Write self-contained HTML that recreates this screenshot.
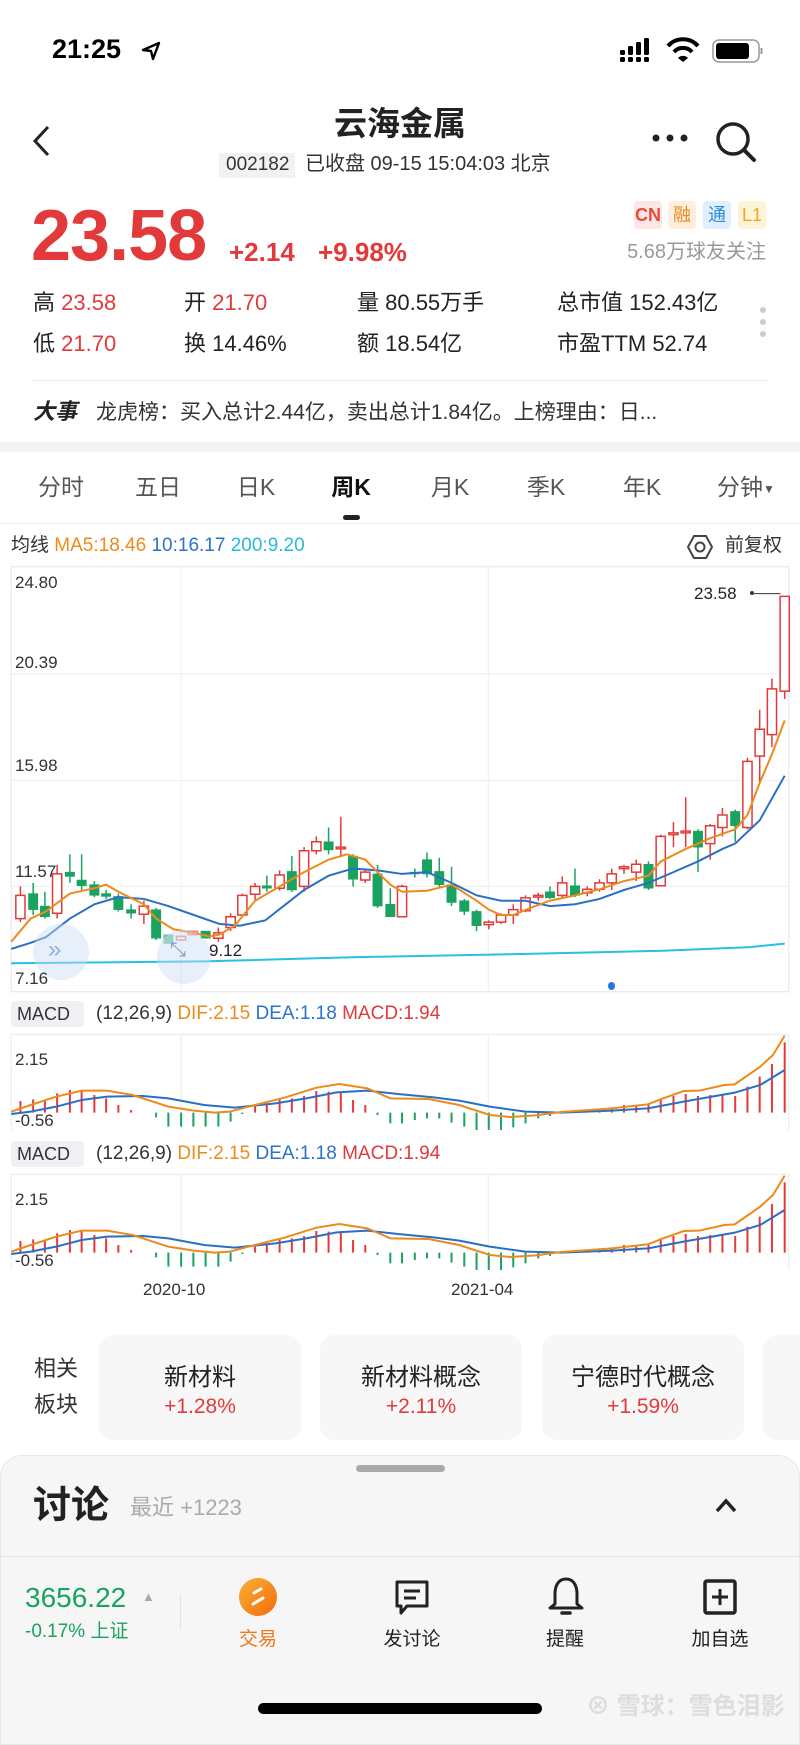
<!DOCTYPE html>
<html><head><meta charset="utf-8">
<style>
*{margin:0;padding:0;box-sizing:border-box}
body{width:800px;height:1731px;position:relative;background:#fff;font-family:"Liberation Sans","Noto Sans CJK SC",sans-serif;color:#222;overflow:hidden}
.a{position:absolute;white-space:nowrap;line-height:1}
.r{color:#e23a3a}
.g{color:#1aa260}
.gr{color:#999}
.card{position:absolute;top:1335px;height:105px;width:202px;background:#f7f7f7;border-radius:14px;text-align:center}
.card .n{position:absolute;top:22px;left:0;right:0;font-size:24px;color:#222}
.card .p{position:absolute;top:60px;left:0;right:0;font-size:21px;color:#e23a3a}
.tab{position:absolute;top:476px;font-size:23px;color:#555;transform:translateX(-50%);white-space:nowrap;line-height:1}
.lbl{position:absolute;font-size:16px;color:#333;white-space:nowrap}
.bi{position:absolute;top:1624px;font-size:19px;color:#222;transform:translateX(-50%);white-space:nowrap}
</style></head><body>

<!-- status bar -->
<div class="a" style="left:52px;top:36px;font-size:27px;font-weight:bold;color:#000">21:25</div>
<svg class="a" style="left:140px;top:40px" width="22" height="22" viewBox="0 0 22 22"><path d="M3 10 L19 3 L13 19 L11 11 Z" fill="none" stroke="#000" stroke-width="2.4" stroke-linejoin="round"/></svg>
<svg class="a" style="left:618px;top:36px" width="145" height="30" viewBox="0 0 145 30">
<rect x="2" y="14" width="5" height="5" rx="1.5"/><rect x="10" y="10" width="5" height="9" rx="1.5"/><rect x="18" y="6" width="5" height="13" rx="1.5"/><rect x="26" y="2" width="5" height="17" rx="1.5"/>
<rect x="2" y="21" width="5" height="5" rx="1.5"/><rect x="10" y="21" width="5" height="5" rx="1.5"/><rect x="18" y="21" width="5" height="5" rx="1.5"/><rect x="26" y="21" width="5" height="5" rx="1.5"/>
<path d="M50 10 A20 20 0 0 1 80 10" fill="none" stroke="#000" stroke-width="4"/><path d="M56 16 A12 12 0 0 1 74 16" fill="none" stroke="#000" stroke-width="4"/><path d="M60 22 L65 26 L70 22 A7 7 0 0 0 60 22Z"/>
<rect x="95" y="4" width="46" height="22" rx="6" fill="none" stroke="#999" stroke-width="1.5"/><rect x="98" y="7" width="33" height="16" rx="3"/><rect x="142.5" y="12" width="2" height="6" fill="#999"/>
</svg>

<!-- nav -->
<svg class="a" style="left:30px;top:124px" width="24" height="34" viewBox="0 0 24 34"><path d="M18 3 L5 17 L18 31" fill="none" stroke="#222" stroke-width="3"/></svg>
<div class="a" style="left:0;width:800px;text-align:center;top:107px;font-size:33px;font-weight:bold;color:#222">云海金属</div>
<div class="a" style="left:219px;top:153px;width:76px;height:25px;background:#f2f2f2"></div>
<div class="a" style="left:226px;top:155px;font-size:19px;color:#333">002182</div>
<div class="a" style="left:305px;top:154px;font-size:20px;color:#333">已收盘 09-15 15:04:03 北京</div>
<svg class="a" style="left:650px;top:132px" width="40" height="12"><circle cx="6" cy="6" r="3.5" fill="#222"/><circle cx="20" cy="6" r="3.5" fill="#222"/><circle cx="34" cy="6" r="3.5" fill="#222"/></svg>
<svg class="a" style="left:714px;top:120px" width="44" height="44" viewBox="0 0 44 44"><circle cx="19" cy="19" r="15" fill="none" stroke="#222" stroke-width="3.5"/><path d="M30 30 L40 40" stroke="#222" stroke-width="4" stroke-linecap="round"/></svg>

<!-- price -->
<div class="a r" style="left:31px;top:200px;font-size:72px;font-weight:bold;letter-spacing:-1px">23.58</div>
<div class="a r" style="left:229px;top:239px;font-size:26px;font-weight:bold">+2.14</div>
<div class="a r" style="left:318px;top:239px;font-size:26px;font-weight:bold">+9.98%</div>
<div class="a" style="left:634px;top:201px;width:28px;height:28px;background:#fde6e6;border-radius:4px;color:#e84a3a;font-size:18px;font-weight:bold;text-align:center;line-height:28px">CN</div>
<div class="a" style="left:668px;top:201px;width:28px;height:28px;background:#fdeedd;border-radius:4px;color:#ec8a1c;font-size:18px;text-align:center;line-height:28px">融</div>
<div class="a" style="left:703px;top:201px;width:28px;height:28px;background:#e1effc;border-radius:4px;color:#2a8be6;font-size:18px;text-align:center;line-height:28px">通</div>
<div class="a" style="left:738px;top:201px;width:28px;height:28px;background:#fdf3d8;border-radius:4px;color:#f0a81a;font-size:18px;text-align:center;line-height:28px">L1</div>
<div class="a gr" style="right:34px;top:242px;font-size:20px">5.68万球友关注</div>

<div class="a" style="left:33px;top:292px;font-size:22px">高 <span class="r">23.58</span></div>
<div class="a" style="left:184px;top:292px;font-size:22px">开 <span class="r">21.70</span></div>
<div class="a" style="left:357px;top:292px;font-size:22px">量 80.55万手</div>
<div class="a" style="left:557px;top:292px;font-size:22px">总市值 152.43亿</div>
<div class="a" style="left:33px;top:333px;font-size:22px">低 <span class="r">21.70</span></div>
<div class="a" style="left:184px;top:333px;font-size:22px">换 14.46%</div>
<div class="a" style="left:357px;top:333px;font-size:22px">额 18.54亿</div>
<div class="a" style="left:557px;top:333px;font-size:22px">市盈TTM 52.74</div>
<svg class="a" style="left:758px;top:305px" width="10" height="40"><circle cx="5" cy="5" r="3" fill="#ccc"/><circle cx="5" cy="17" r="3" fill="#ccc"/><circle cx="5" cy="29" r="3" fill="#ccc"/></svg>
<div class="a" style="left:33px;top:380px;width:734px;height:1px;background:#e8e8e8"></div>
<div class="a" style="left:33px;top:401px;font-size:22px;font-weight:bold;font-style:italic">大事</div>
<div class="a" style="left:96px;top:402px;font-size:21px;color:#333">龙虎榜：买入总计2.44亿，卖出总计1.84亿。上榜理由：日...</div>
<div class="a" style="left:0;top:442px;width:800px;height:10px;background:#f3f4f7"></div>

<!-- tabs -->
<div class="tab" style="left:61px">分时</div>
<div class="tab" style="left:158px">五日</div>
<div class="tab" style="left:256px">日K</div>
<div class="tab" style="left:351px;color:#111;font-weight:bold">周K</div>
<div class="tab" style="left:450px">月K</div>
<div class="tab" style="left:546px">季K</div>
<div class="tab" style="left:642px">年K</div>
<div class="tab" style="left:746px">分钟<span style="font-size:12px;vertical-align:middle">▼</span></div>
<div class="a" style="left:343px;top:515px;width:17px;height:5px;border-radius:3px;background:#222"></div>
<div class="a" style="left:0;top:523px;width:800px;height:1px;background:#eee"></div>

<div class="a" style="left:11px;top:536px;font-size:19px;color:#333">均线 <span style="color:#ec8a1c">MA5:18.46</span> <span style="color:#2a73c8">10:16.17</span> <span style="color:#27b8e0">200:9.20</span></div>
<svg class="a" style="left:686px;top:533px" width="28" height="28" viewBox="0 0 28 28"><path d="M8 3 L20 3 L26 14 L20 25 L8 25 L2 14 Z" fill="none" stroke="#444" stroke-width="2"/><circle cx="14" cy="14" r="4.5" fill="none" stroke="#444" stroke-width="2"/></svg>
<div class="a" style="left:725px;top:536px;font-size:19px;color:#333">前复权</div>

<!-- main chart -->
<svg class="a" style="left:0;top:440px" width="800" height="560" viewBox="0 0 1568 1568" preserveAspectRatio="none">
<g stroke="#eee" vector-effect="non-scaling-stroke" fill="none">
<rect x="22" y="355" width="1524" height="1190" stroke="#e6e6e6" vector-effect="non-scaling-stroke"/>
<line x1="22" y1="655" x2="1546" y2="655" vector-effect="non-scaling-stroke"/>
<line x1="22" y1="953" x2="1546" y2="953" vector-effect="non-scaling-stroke"/>
<line x1="22" y1="1250" x2="1546" y2="1250" vector-effect="non-scaling-stroke"/>
<line x1="355" y1="355" x2="355" y2="1545" vector-effect="non-scaling-stroke"/>
<line x1="957" y1="355" x2="957" y2="1545" vector-effect="non-scaling-stroke"/>
</g>
<polyline vector-effect="non-scaling-stroke" fill="none" stroke="#27c0e0" stroke-width="2" points="22,1465 400,1460 700,1448 1000,1440 1300,1430 1470,1420 1538,1410"/>
<g vector-effect="non-scaling-stroke" stroke-width="1.5">
<g stroke="#1aa260" fill="#1aa260">
<line x1="65" y1="1240" x2="65" y2="1330" vector-effect="non-scaling-stroke"/><rect x="56" y="1270" width="18" height="45"/>
<line x1="88" y1="1265" x2="88" y2="1340" vector-effect="non-scaling-stroke"/><rect x="79" y="1305" width="18" height="30"/>
<line x1="137" y1="1160" x2="137" y2="1240" vector-effect="non-scaling-stroke"/><rect x="128" y="1210" width="18" height="12"/>
<line x1="160" y1="1160" x2="160" y2="1260" vector-effect="non-scaling-stroke"/><rect x="151" y="1232" width="18" height="16"/>
<line x1="185" y1="1235" x2="185" y2="1280" vector-effect="non-scaling-stroke"/><rect x="176" y="1245" width="18" height="30"/>
<line x1="208" y1="1260" x2="208" y2="1285" vector-effect="non-scaling-stroke"/><rect x="199" y="1270" width="18" height="8"/>
<line x1="232" y1="1270" x2="232" y2="1320" vector-effect="non-scaling-stroke"/><rect x="223" y="1278" width="18" height="37"/>
<line x1="257" y1="1300" x2="257" y2="1340" vector-effect="non-scaling-stroke"/><rect x="248" y="1315" width="18" height="10"/>
<line x1="306" y1="1310" x2="306" y2="1400" vector-effect="non-scaling-stroke"/><rect x="297" y="1315" width="18" height="80"/>
<rect x="321" y="1385" width="18" height="25" opacity=".6"/>
<rect x="394" y="1375" width="18" height="20"/>
<line x1="523" y1="1220" x2="523" y2="1265" vector-effect="non-scaling-stroke"/><rect x="514" y="1248" width="18" height="7"/>
<line x1="572" y1="1165" x2="572" y2="1265" vector-effect="non-scaling-stroke"/><rect x="563" y="1208" width="18" height="52"/>
<line x1="644" y1="1085" x2="644" y2="1160" vector-effect="non-scaling-stroke"/><rect x="635" y="1125" width="18" height="23"/>
<line x1="692" y1="1160" x2="692" y2="1250" vector-effect="non-scaling-stroke"/><rect x="683" y="1165" width="18" height="65"/>
<line x1="740" y1="1190" x2="740" y2="1310" vector-effect="non-scaling-stroke"/><rect x="731" y="1215" width="18" height="90"/>
<line x1="765" y1="1255" x2="765" y2="1335" vector-effect="non-scaling-stroke"/><rect x="756" y="1300" width="18" height="35"/>
<line x1="813" y1="1200" x2="813" y2="1225" vector-effect="non-scaling-stroke"/><rect x="804" y="1210" width="18" height="5"/>
<line x1="837" y1="1155" x2="837" y2="1225" vector-effect="non-scaling-stroke"/><rect x="828" y="1175" width="18" height="40"/>
<line x1="861" y1="1170" x2="861" y2="1250" vector-effect="non-scaling-stroke"/><rect x="852" y="1208" width="18" height="37"/>
<line x1="885" y1="1195" x2="885" y2="1305" vector-effect="non-scaling-stroke"/><rect x="876" y="1245" width="18" height="50"/>
<line x1="910" y1="1285" x2="910" y2="1330" vector-effect="non-scaling-stroke"/><rect x="901" y="1290" width="18" height="30"/>
<line x1="934" y1="1315" x2="934" y2="1375" vector-effect="non-scaling-stroke"/><rect x="925" y="1320" width="18" height="40"/>
<line x1="1078" y1="1250" x2="1078" y2="1285" vector-effect="non-scaling-stroke"/><rect x="1069" y="1265" width="18" height="17"/>
<line x1="1127" y1="1200" x2="1127" y2="1280" vector-effect="non-scaling-stroke"/><rect x="1118" y="1248" width="18" height="27"/>
<line x1="1271" y1="1180" x2="1271" y2="1260" vector-effect="non-scaling-stroke"/><rect x="1262" y="1188" width="18" height="67"/>
<line x1="1368" y1="1090" x2="1368" y2="1210" vector-effect="non-scaling-stroke"/><rect x="1359" y="1095" width="18" height="45"/>
<line x1="1441" y1="1035" x2="1441" y2="1125" vector-effect="non-scaling-stroke"/><rect x="1432" y="1040" width="18" height="40"/>
</g>
<g stroke="#e23a3a" fill="#fff">
<line x1="40" y1="1250" x2="40" y2="1350" vector-effect="non-scaling-stroke"/><rect x="31" y="1275" width="18" height="65" vector-effect="non-scaling-stroke"/>
<line x1="112" y1="1190" x2="112" y2="1340" vector-effect="non-scaling-stroke"/><rect x="103" y="1215" width="18" height="110" vector-effect="non-scaling-stroke"/>
<line x1="282" y1="1290" x2="282" y2="1355" vector-effect="non-scaling-stroke"/><rect x="273" y="1305" width="18" height="23" vector-effect="non-scaling-stroke"/>
<rect x="346" y="1390" width="18" height="10" vector-effect="non-scaling-stroke" opacity=".6"/>
<rect x="369" y="1375" width="18" height="10" vector-effect="non-scaling-stroke" opacity=".6"/>
<line x1="428" y1="1365" x2="428" y2="1405" vector-effect="non-scaling-stroke"/><rect x="419" y="1380" width="18" height="15" vector-effect="non-scaling-stroke"/>
<line x1="452" y1="1325" x2="452" y2="1375" vector-effect="non-scaling-stroke"/><rect x="443" y="1335" width="18" height="30" vector-effect="non-scaling-stroke"/>
<line x1="475" y1="1270" x2="475" y2="1335" vector-effect="non-scaling-stroke"/><rect x="466" y="1275" width="18" height="55" vector-effect="non-scaling-stroke"/>
<line x1="500" y1="1240" x2="500" y2="1290" vector-effect="non-scaling-stroke"/><rect x="491" y="1250" width="18" height="22" vector-effect="non-scaling-stroke"/>
<line x1="548" y1="1205" x2="548" y2="1262" vector-effect="non-scaling-stroke"/><rect x="539" y="1218" width="18" height="37" vector-effect="non-scaling-stroke"/>
<line x1="596" y1="1140" x2="596" y2="1265" vector-effect="non-scaling-stroke"/><rect x="587" y="1150" width="18" height="100" vector-effect="non-scaling-stroke"/>
<line x1="620" y1="1110" x2="620" y2="1160" vector-effect="non-scaling-stroke"/><rect x="611" y="1125" width="18" height="25" vector-effect="non-scaling-stroke"/>
<line x1="668" y1="1055" x2="668" y2="1165" vector-effect="non-scaling-stroke"/><rect x="659" y="1140" width="18" height="5" vector-effect="non-scaling-stroke"/>
<line x1="716" y1="1200" x2="716" y2="1240" vector-effect="non-scaling-stroke"/><rect x="707" y="1210" width="18" height="22" vector-effect="non-scaling-stroke"/>
<line x1="788" y1="1245" x2="788" y2="1335" vector-effect="non-scaling-stroke"/><rect x="779" y="1250" width="18" height="85" vector-effect="non-scaling-stroke"/>
<line x1="958" y1="1345" x2="958" y2="1370" vector-effect="non-scaling-stroke"/><rect x="949" y="1350" width="18" height="7" vector-effect="non-scaling-stroke"/>
<line x1="982" y1="1325" x2="982" y2="1355" vector-effect="non-scaling-stroke"/><rect x="973" y="1330" width="18" height="20" vector-effect="non-scaling-stroke"/>
<line x1="1006" y1="1300" x2="1006" y2="1355" vector-effect="non-scaling-stroke"/><rect x="997" y="1315" width="18" height="15" vector-effect="non-scaling-stroke"/>
<line x1="1030" y1="1275" x2="1030" y2="1322" vector-effect="non-scaling-stroke"/><rect x="1021" y="1282" width="18" height="36" vector-effect="non-scaling-stroke"/>
<line x1="1055" y1="1268" x2="1055" y2="1290" vector-effect="non-scaling-stroke"/><rect x="1046" y="1275" width="18" height="5" vector-effect="non-scaling-stroke"/>
<line x1="1102" y1="1222" x2="1102" y2="1280" vector-effect="non-scaling-stroke"/><rect x="1093" y="1240" width="18" height="35" vector-effect="non-scaling-stroke"/>
<line x1="1151" y1="1250" x2="1151" y2="1278" vector-effect="non-scaling-stroke"/><rect x="1142" y="1258" width="18" height="10" vector-effect="non-scaling-stroke"/>
<line x1="1175" y1="1230" x2="1175" y2="1265" vector-effect="non-scaling-stroke"/><rect x="1166" y="1240" width="18" height="18" vector-effect="non-scaling-stroke"/>
<line x1="1199" y1="1200" x2="1199" y2="1260" vector-effect="non-scaling-stroke"/><rect x="1190" y="1215" width="18" height="25" vector-effect="non-scaling-stroke"/>
<line x1="1223" y1="1190" x2="1223" y2="1215" vector-effect="non-scaling-stroke"/><rect x="1214" y="1195" width="18" height="5" vector-effect="non-scaling-stroke"/>
<line x1="1247" y1="1175" x2="1247" y2="1235" vector-effect="non-scaling-stroke"/><rect x="1238" y="1188" width="18" height="22" vector-effect="non-scaling-stroke"/>
<line x1="1295" y1="1105" x2="1295" y2="1250" vector-effect="non-scaling-stroke"/><rect x="1286" y="1110" width="18" height="138" vector-effect="non-scaling-stroke"/>
<line x1="1320" y1="1070" x2="1320" y2="1140" vector-effect="non-scaling-stroke"/><rect x="1311" y="1100" width="18" height="5" vector-effect="non-scaling-stroke"/>
<line x1="1344" y1="1000" x2="1344" y2="1140" vector-effect="non-scaling-stroke"/><rect x="1335" y="1095" width="18" height="5" vector-effect="non-scaling-stroke"/>
<line x1="1392" y1="1075" x2="1392" y2="1175" vector-effect="non-scaling-stroke"/><rect x="1383" y="1080" width="18" height="50" vector-effect="non-scaling-stroke"/>
<line x1="1416" y1="1030" x2="1416" y2="1110" vector-effect="non-scaling-stroke"/><rect x="1407" y="1050" width="18" height="35" vector-effect="non-scaling-stroke"/>
<line x1="1465" y1="890" x2="1465" y2="1090" vector-effect="non-scaling-stroke"/><rect x="1456" y="900" width="18" height="185" vector-effect="non-scaling-stroke"/>
<line x1="1489" y1="755" x2="1489" y2="960" vector-effect="non-scaling-stroke"/><rect x="1480" y="810" width="18" height="75" vector-effect="non-scaling-stroke"/>
<line x1="1513" y1="668" x2="1513" y2="860" vector-effect="non-scaling-stroke"/><rect x="1504" y="697" width="18" height="128" vector-effect="non-scaling-stroke"/>
<line x1="1538" y1="438" x2="1538" y2="725" vector-effect="non-scaling-stroke"/><rect x="1529" y="438" width="18" height="265" vector-effect="non-scaling-stroke"/>
</g>
</g>
<polyline vector-effect="non-scaling-stroke" fill="none" stroke="#2a6fc4" stroke-width="2" points="22,1425 60,1408 90,1392 137,1340 185,1300 232,1280 282,1285 330,1305 380,1330 430,1355 470,1360 520,1345 560,1300 596,1260 644,1220 692,1200 740,1205 788,1215 837,1210 885,1240 934,1275 982,1290 1030,1290 1078,1305 1127,1300 1175,1285 1223,1260 1271,1240 1320,1210 1368,1180 1416,1145 1441,1130 1489,1065 1538,940"/>
<polyline vector-effect="non-scaling-stroke" fill="none" stroke="#ec8a1c" stroke-width="2" points="22,1405 60,1340 90,1320 137,1270 185,1255 208,1245 232,1265 282,1300 306,1340 340,1370 380,1380 410,1390 430,1385 460,1360 500,1290 548,1250 596,1210 644,1175 680,1160 716,1175 740,1210 765,1245 788,1265 837,1262 885,1245 934,1290 958,1315 982,1330 1006,1330 1040,1310 1078,1290 1127,1275 1175,1258 1223,1235 1271,1220 1295,1180 1344,1145 1392,1115 1441,1090 1465,1050 1489,960 1513,880 1538,785"/>
<line x1="1478" y1="430" x2="1530" y2="430" stroke="#333" vector-effect="non-scaling-stroke"/>
</svg>
<div class="a" style="left:33px;top:924px;width:56px;height:56px;border-radius:50%;background:rgba(200,220,245,.45)"></div>
<div class="a" style="left:48px;top:938px;font-size:24px;color:#8eb0dc">»</div>
<div class="a" style="left:157px;top:930px;width:54px;height:54px;border-radius:50%;background:rgba(200,220,245,.45)"></div>
<div class="a" style="left:170px;top:940px;font-size:20px;color:#7c9cc8">⤡</div>
<div class="lbl" style="left:15px;top:573px;font-size:17px">24.80</div>
<div class="lbl" style="left:15px;top:653px;font-size:17px">20.39</div>
<div class="lbl" style="left:15px;top:756px;font-size:17px">15.98</div>
<div class="lbl" style="left:15px;top:862px;font-size:17px">11.57</div>
<div class="lbl" style="left:15px;top:969px;font-size:17px">7.16</div>
<div class="lbl" style="left:694px;top:584px;font-size:17px;color:#222">23.58</div>
<div class="a" style="left:750px;top:591px;width:4px;height:4px;border-radius:50%;background:#333"></div>
<div class="lbl" style="left:209px;top:941px;font-size:17px;color:#222">9.12</div>
<div class="a" style="left:608px;top:982px;width:7px;height:8px;border-radius:50%;background:#2a73e0"></div>

<!-- MACD panels -->
<div class="a" style="left:11px;top:1001px;width:73px;height:26px;background:#eef0f4;border-radius:4px"></div>
<div class="a" style="left:17px;top:1005px;font-size:18px;color:#333">MACD</div>
<div class="a" style="left:96px;top:1004px;font-size:19px;color:#333">(12,26,9) <span style="color:#ec8a1c">DIF:2.15</span> <span style="color:#2a73c8">DEA:1.18</span> <span style="color:#e23a3a">MACD:1.94</span></div>
<div class="a" style="left:11px;top:1141px;width:73px;height:26px;background:#eef0f4;border-radius:4px"></div>
<div class="a" style="left:17px;top:1145px;font-size:18px;color:#333">MACD</div>
<div class="a" style="left:96px;top:1144px;font-size:19px;color:#333">(12,26,9) <span style="color:#ec8a1c">DIF:2.15</span> <span style="color:#2a73c8">DEA:1.18</span> <span style="color:#e23a3a">MACD:1.94</span></div>

<svg class="a" style="left:0;top:990px" width="800" height="140" viewBox="0 0 1568 420" preserveAspectRatio="none">
<g fill="none" stroke="#eaeaea"><rect x="22" y="133" width="1524" height="292" vector-effect="non-scaling-stroke"/><line x1="355" y1="133" x2="355" y2="425" vector-effect="non-scaling-stroke"/><line x1="957" y1="133" x2="957" y2="425" vector-effect="non-scaling-stroke"/></g>
<g stroke-width="2">
<path stroke="#e23a3a" vector-effect="non-scaling-stroke" d="M40 368V333M65 368V328M88 368V330M112 368V310M137 368V300M160 368V302M185 368V315M208 368V325M232 368V345M257 368V360M500 368V350M523 368V345M548 368V328M572 368V325M596 368V318M620 368V303M644 368V305M668 368V305M692 368V330M716 368V345M1102 368V365M1127 368V362M1151 368V360M1175 368V356M1199 368V352M1223 368V345M1247 368V345M1271 368V342M1295 368V325M1320 368V318M1344 368V312M1368 368V318M1392 368V315M1416 368V315M1441 368V318M1465 368V290M1489 368V260M1513 368V222M1538 368V157"/>
<path stroke="#1aa260" vector-effect="non-scaling-stroke" d="M306 368V382M330 368V410M355 368V410M379 368V410M403 368V410M428 368V410M452 368V395M475 368V372M740 368V375M765 368V400M788 368V400M813 368V390M837 368V385M861 368V385M885 368V398M910 368V410M934 368V420M958 368V425M982 368V420M1006 368V412M1030 368V400M1055 368V385M1078 368V378"/>
</g>
<polyline vector-effect="non-scaling-stroke" fill="none" stroke="#2a6fc4" stroke-width="2" points="22,372 60,365 110,350 160,330 210,320 280,318 330,325 400,345 460,353 540,340 600,325 660,307 720,302 780,312 850,322 900,332 960,350 1030,365 1100,368 1200,362 1270,355 1340,335 1440,308 1490,285 1538,240"/>
<polyline vector-effect="non-scaling-stroke" fill="none" stroke="#ec8a1c" stroke-width="2" points="22,365 60,345 110,320 160,302 210,302 260,315 330,350 380,362 420,368 450,365 500,345 560,322 620,293 665,282 720,295 765,325 840,327 900,345 960,375 1000,381 1050,376 1100,366 1200,355 1270,343 1300,325 1340,303 1370,302 1420,285 1440,283 1490,230 1515,195 1538,137"/>
</svg>
<div class="lbl" style="left:15px;top:1050px;font-size:17px">2.15</div>
<div class="lbl" style="left:15px;top:1111px;font-size:17px">-0.56</div>

<svg class="a" style="left:0;top:1130px" width="800" height="140" viewBox="0 0 1568 420" preserveAspectRatio="none">
<g fill="none" stroke="#eaeaea"><rect x="22" y="133" width="1524" height="292" vector-effect="non-scaling-stroke"/><line x1="355" y1="133" x2="355" y2="425" vector-effect="non-scaling-stroke"/><line x1="957" y1="133" x2="957" y2="425" vector-effect="non-scaling-stroke"/></g>
<g stroke-width="2">
<path stroke="#e23a3a" vector-effect="non-scaling-stroke" d="M40 368V333M65 368V328M88 368V330M112 368V310M137 368V300M160 368V302M185 368V315M208 368V325M232 368V345M257 368V360M500 368V350M523 368V345M548 368V328M572 368V325M596 368V318M620 368V303M644 368V305M668 368V305M692 368V330M716 368V345M1102 368V365M1127 368V362M1151 368V360M1175 368V356M1199 368V352M1223 368V345M1247 368V345M1271 368V342M1295 368V325M1320 368V318M1344 368V312M1368 368V318M1392 368V315M1416 368V315M1441 368V318M1465 368V290M1489 368V260M1513 368V222M1538 368V157"/>
<path stroke="#1aa260" vector-effect="non-scaling-stroke" d="M306 368V382M330 368V410M355 368V410M379 368V410M403 368V410M428 368V410M452 368V395M475 368V372M740 368V375M765 368V400M788 368V400M813 368V390M837 368V385M861 368V385M885 368V398M910 368V410M934 368V420M958 368V425M982 368V420M1006 368V412M1030 368V400M1055 368V385M1078 368V378"/>
</g>
<polyline vector-effect="non-scaling-stroke" fill="none" stroke="#2a6fc4" stroke-width="2" points="22,372 60,365 110,350 160,330 210,320 280,318 330,325 400,345 460,353 540,340 600,325 660,307 720,302 780,312 850,322 900,332 960,350 1030,365 1100,368 1200,362 1270,355 1340,335 1440,308 1490,285 1538,240"/>
<polyline vector-effect="non-scaling-stroke" fill="none" stroke="#ec8a1c" stroke-width="2" points="22,365 60,345 110,320 160,302 210,302 260,315 330,350 380,362 420,368 450,365 500,345 560,322 620,293 665,282 720,295 765,325 840,327 900,345 960,375 1000,381 1050,376 1100,366 1200,355 1270,343 1300,325 1340,303 1370,302 1420,285 1440,283 1490,230 1515,195 1538,137"/>
</svg>
<div class="lbl" style="left:15px;top:1190px;font-size:17px">2.15</div>
<div class="lbl" style="left:15px;top:1251px;font-size:17px">-0.56</div>

<div class="lbl" style="left:143px;top:1280px;font-size:17px">2020-10</div>
<div class="lbl" style="left:451px;top:1280px;font-size:17px">2021-04</div>

<!-- related -->
<div class="a" style="left:34px;top:1358px;font-size:22px;color:#333">相关</div>
<div class="a" style="left:34px;top:1394px;font-size:22px;color:#333">板块</div>
<div class="card" style="left:99px"><div class="n">新材料</div><div class="p">+1.28%</div></div>
<div class="card" style="left:320px"><div class="n">新材料概念</div><div class="p">+2.11%</div></div>
<div class="card" style="left:542px"><div class="n">宁德时代概念</div><div class="p">+1.59%</div></div>
<div class="card" style="left:763px"></div>

<!-- sheet -->
<div class="a" style="left:0;top:1455px;width:800px;height:290px;background:#f6f6f6;border:1px solid #e8e8e8;border-radius:22px 22px 0 0"></div>
<div class="a" style="left:356px;top:1465px;width:89px;height:7px;border-radius:4px;background:#aaa"></div>
<div class="a" style="left:33px;top:1487px;font-size:38px;font-weight:bold;color:#222">讨论</div>
<div class="a" style="left:130px;top:1497px;font-size:22px;color:#aaa">最近 +1223</div>
<svg class="a" style="left:714px;top:1496px" width="24" height="18"><path d="M3 15 L12 5 L21 15" fill="none" stroke="#222" stroke-width="3.5"/></svg>
<div class="a" style="left:0;top:1556px;width:800px;height:1px;background:#e2e2e2"></div>

<div class="a g" style="left:25px;top:1584px;font-size:28px">3656.22</div>
<div class="a" style="left:142px;top:1590px;font-size:13px;color:#aaa">▲</div>
<div class="a g" style="left:25px;top:1622px;font-size:19px">-0.17% 上证</div>
<div class="a" style="left:180px;top:1594px;width:1px;height:36px;background:#e2e2e2"></div>

<svg class="a" style="left:239px;top:1578px" width="38" height="38" viewBox="0 0 38 38"><defs><linearGradient id="og" x1="0" y1="0" x2="1" y2="1"><stop offset="0" stop-color="#fbb034"/><stop offset="1" stop-color="#f26b0f"/></linearGradient></defs><circle cx="19" cy="19" r="19" fill="url(#og)"/><path d="M15 15 L22 11 M14 26 L24 20" stroke="#fff" stroke-width="3" stroke-linecap="round"/></svg>
<div class="bi" style="left:258px;color:#ec7a1c">交易</div>
<svg class="a" style="left:393px;top:1578px" width="38" height="40" viewBox="0 0 38 40"><path d="M4 4 H34 V28 H14 L8 35 V28 H4 Z" fill="none" stroke="#222" stroke-width="3" stroke-linejoin="round"/><path d="M11 13 H27 M11 20 H23" stroke="#222" stroke-width="3"/></svg>
<div class="bi" style="left:412px">发讨论</div>
<svg class="a" style="left:546px;top:1576px" width="40" height="42" viewBox="0 0 40 42"><path d="M20 3 C11 3 9 12 9 18 V28 L4 32 H36 L31 28 V18 C31 12 29 3 20 3 Z" fill="none" stroke="#222" stroke-width="3" stroke-linejoin="round"/><path d="M16 37 H24" stroke="#222" stroke-width="3.5" stroke-linecap="round"/></svg>
<div class="bi" style="left:565px">提醒</div>
<svg class="a" style="left:702px;top:1578px" width="36" height="38" viewBox="0 0 36 38"><rect x="3" y="3" width="30" height="32" rx="2" fill="none" stroke="#222" stroke-width="3.5"/><path d="M18 11 V27 M10 19 H26" stroke="#222" stroke-width="3"/></svg>
<div class="bi" style="left:720px">加自选</div>

<div class="a" style="left:258px;top:1703px;width:284px;height:11px;border-radius:6px;background:#000"></div>
<div class="a" style="left:586px;top:1695px;font-size:24px;color:#ddd;font-weight:bold">⊗ 雪球：雪色泪影</div>
</body></html>
